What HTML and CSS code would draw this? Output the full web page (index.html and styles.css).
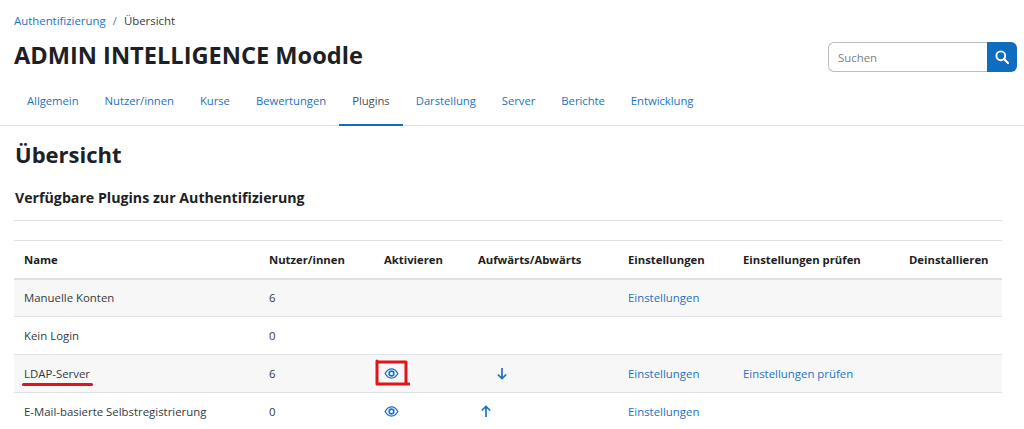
FILE: index.html
```html
<!DOCTYPE html>
<html lang="de">
<head>
<meta charset="utf-8">
<title>Übersicht</title>
<link rel="stylesheet" href="styles.css">
</head>
<body>
<header class="page-header">
  <div class="head-left">
    <nav class="crumbs"><a href="#">Authentifizierung</a><span class="sep">/</span><span>Übersicht</span></nav>
    <h1>ADMIN INTELLIGENCE Moodle</h1>
  </div>
  <form class="search">
    <input type="text" placeholder="Suchen">
    <button type="button" aria-label="Suchen"><svg width="14" height="14" viewBox="0 0 14 14"><circle cx="5.8" cy="5.8" r="4.4" fill="none" stroke="#fff" stroke-width="1.9"/><path d="M9 9l4 4" stroke="#fff" stroke-width="2.1" stroke-linecap="round"/></svg></button>
  </form>
</header>
<nav class="tabs">
  <a href="#">Allgemein</a><a href="#">Nutzer/innen</a><a href="#">Kurse</a><a href="#">Bewertungen</a><a href="#" class="active">Plugins</a><a href="#">Darstellung</a><a href="#">Server</a><a href="#">Berichte</a><a href="#">Entwicklung</a>
</nav>
<main class="content">
  <h2>Übersicht</h2>
  <h3>Verfügbare Plugins zur Authentifizierung</h3>
  <table>
    <thead>
      <tr><th class="c1">Name</th><th class="c2">Nutzer/innen</th><th class="c3">Aktivieren</th><th class="c4">Aufwärts/Abwärts</th><th class="c5">Einstellungen</th><th class="c6">Einstellungen prüfen</th><th>Deinstallieren</th></tr>
    </thead>
    <tbody>
      <tr class="odd"><td>Manuelle Konten</td><td>6</td><td></td><td></td><td><a href="#">Einstellungen</a></td><td></td><td></td></tr>
      <tr><td>Kein Login</td><td>0</td><td></td><td></td><td></td><td></td><td></td></tr>
      <tr class="odd"><td><span class="marked-line">LDAP-Server</span></td><td>6</td>
        <td><span class="marked-box"><svg class="eye" width="15" height="11" viewBox="0 0 16 12"><path d="M1 6C3 2.6 5.3 1 8 1s5 1.600 7 5c-2 3.400-4.300 5-7 5S3 9.400 1 6z" fill="none" stroke="#1d72c4" stroke-width="1.400"/><circle cx="8" cy="6" r="2.600" fill="none" stroke="#1d72c4" stroke-width="1.700"/></svg><svg class="scribble" width="36" height="28" viewBox="0 0 36 28"><path d="M3 3H32V24.500M3 2V25H35" fill="none" stroke="#e0141c" stroke-width="3" stroke-linecap="round" stroke-linejoin="round"/></svg></span></td>
        <td class="down"><svg width="12" height="13" viewBox="0 0 12 13"><path d="M6 1v10.500M1.800 7.500L6 11.500l4.200-4" fill="none" stroke="#1d72c4" stroke-width="1.700"/></svg></td>
        <td><a href="#">Einstellungen</a></td><td><a href="#">Einstellungen prüfen</a></td><td></td></tr>
      <tr><td>E-Mail-basierte Selbstregistrierung</td><td>0</td>
        <td><span class="eye-wrap"><svg class="eye" width="15" height="11" viewBox="0 0 16 12"><path d="M1 6C3 2.6 5.3 1 8 1s5 1.600 7 5c-2 3.400-4.300 5-7 5S3 9.400 1 6z" fill="none" stroke="#1d72c4" stroke-width="1.400"/><circle cx="8" cy="6" r="2.600" fill="none" stroke="#1d72c4" stroke-width="1.700"/></svg></span></td>
        <td class="up"><svg width="12" height="13" viewBox="0 0 12 13"><path d="M6 12V1.500M1.800 5.500L6 1.500l4.200 4" fill="none" stroke="#1d72c4" stroke-width="1.700"/></svg></td>
        <td><a href="#">Einstellungen</a></td><td></td><td></td></tr>
    </tbody>
  </table>
</main>
</body>
</html>
```
FILE: styles.css
```css
* { box-sizing: border-box; }
html, body { margin: 0; height: 429px; overflow: hidden; }
body { background: #fff; color: #343a40; font-family: "Open Sans", "Noto Sans", sans-serif; font-size: 11.4px; }
a { color: #1d72c4; text-decoration: none; }
.page-header { display: flex; justify-content: space-between; align-items: flex-start; padding: 13px 7px 0 14px; height: 83px; }
.crumbs { line-height: 16px; }
.sep { margin: 0 7px; color: #6a737b; }
h1 { margin: 9px 0 0; font-size: 23.6px; line-height: 34px; font-weight: 700; color: #1d2125; }
.search { display: flex; margin-top: 29px; height: 30px; width: 189px; }
.search input { flex: 1; min-width: 0; border: 1px solid #b8bcc6; border-right: 0; border-radius: 6px 0 0 6px; padding: 0 9px; font: inherit; background: #fff; }
.search input::placeholder { color: #7a8086; opacity: 1; }
.search button { width: 30px; border: 0; padding: 0; background: #0f6cbf; border-radius: 0 6px 6px 0; display: flex; align-items: center; justify-content: center; }
.tabs { display: flex; height: 43px; padding-left: 14px; border-bottom: 1px solid #dee2e6; font-size: 11.3px; }
.tabs a { display: block; padding: 0 13px; line-height: 36px; height: 43px; letter-spacing: -.04px; }
.tabs a.active { color: #495057; border-bottom: 2px solid #0f6cbf; }
.content { padding: 0 22px 0 14px; }
h2 { margin: 11px 0 0; padding-left: 1px; font-size: 22px; line-height: 34px; font-weight: 700; color: #1d2125; }
h3 { margin: 17px 0 0; padding: 0 0 12px 1px; font-size: 14.2px; line-height: 20px; font-weight: 700; border-bottom: 1px solid #dee2e6; color: #1d2125; }
table { width: 988px; margin-top: 19px; border-collapse: collapse; table-layout: fixed; }
th, td { height: 38px; padding: 0 10px; border-top: 1px solid #dee2e6; text-align: left; vertical-align: middle; font-weight: 400; white-space: nowrap; }
th { font-weight: 700; border-bottom: 2px solid #dee2e6; color: #1d2125; font-size: 11.3px; }
.c1 { width: 245px; } .c2 { width: 115px; } .c3 { width: 94px; } .c4 { width: 150px; } .c5 { width: 115px; } .c6 { width: 166px; }
.odd { background: #f7f7f7; }
svg { display: block; }
.marked-line, .marked-box, .eye-wrap { position: relative; display: inline-block; }
.eye-wrap, .marked-box { top: 1px; }
.marked-line::after { content: ""; position: absolute; left: -2px; right: -3px; bottom: -5px; height: 3px; border-radius: 2px; background: #e0141c; }
.scribble { position: absolute; left: -10px; top: -9px; }
.down svg { margin-left: 18px; }
.up svg { margin-left: 2px; }
```
